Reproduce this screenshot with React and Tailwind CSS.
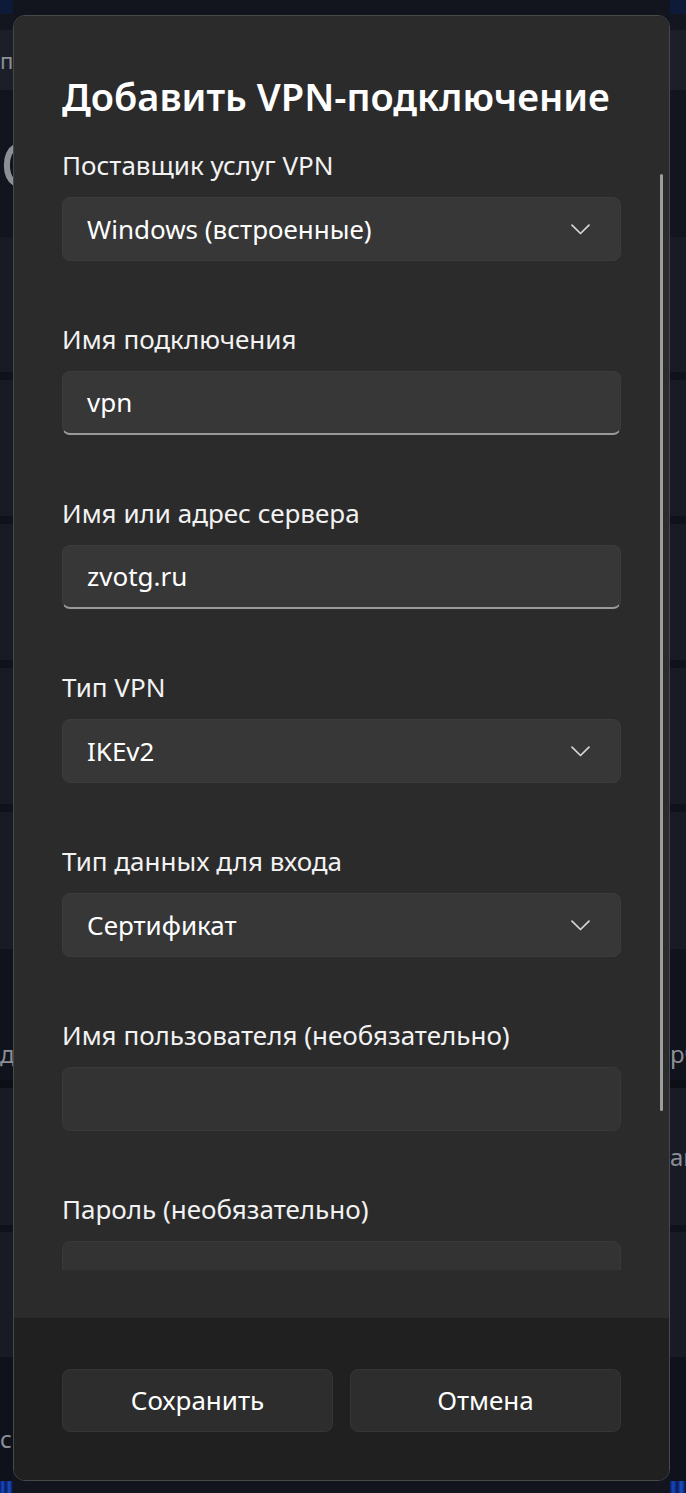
const fields = [
  { label: 'Поставщик услуг VPN', value: 'Windows (встроенные)', kind: 'select' },
  { label: 'Имя подключения', value: 'vpn', kind: 'input' },
  { label: 'Имя или адрес сервера', value: 'zvotg.ru', kind: 'input' },
  { label: 'Тип VPN', value: 'IKEv2', kind: 'select' },
  { label: 'Тип данных для входа', value: 'Сертификат', kind: 'select' },
  { label: 'Имя пользователя (необязательно)', value: '', kind: 'empty' },
  { label: 'Пароль (необязательно)', value: '', kind: 'empty' },
]

function Chevron() {
  return (
    <svg width="19" height="11" viewBox="0 0 19 11" fill="none" className="text-[#d6d6d6]">
      <path d="M1 1.2 L9.5 9.5 L18 1.2" stroke="currentColor" strokeWidth="1.7" strokeLinecap="round" strokeLinejoin="round" />
    </svg>
  )
}

function Field({ f }) {
  return (
    <div className="flex flex-col gap-4 mb-[62px]">
      <p className="h-8 flex items-center text-[26px] leading-8 text-[#f2f2f2]">{f.label}</p>
      <div
        className={
          'h-16 shrink-0 rounded-lg flex items-center justify-between pl-6 pr-[30px] text-[26px] text-white ' +
          (f.kind === 'input'
            ? 'bg-[#373737] border border-[#3c3c3c] border-b-2 border-b-[#9a9a9a]'
            : f.kind === 'select'
            ? 'bg-[#373737] border border-[#3c3c3c]'
            : 'bg-[#333333] border border-[#393939]')
        }
      >
        <span>{f.value}</span>
        {f.kind === 'select' && <Chevron />}
      </div>
    </div>
  )
}

function BgStrip({ side }) {
  const left = side === 'left'
  return (
    <div className="flex flex-col w-full h-full text-[#8c8f96]">
      <div className="h-[14px] bg-[#0d1a38]" />
      <div className="h-4 bg-[#13161e]" />
      <div className="h-[60px] bg-[#1c1f28] flex items-center text-[22px]">{left ? 'па' : ''}</div>
      <div className="h-[147px] bg-[#12151d] flex items-center text-[64px] leading-none">{left ? 'С' : ''}</div>
      <div className="h-[135px] bg-[#181b24]" />
      <div className="h-2 bg-[#0f121a]" />
      <div className="h-[136px] bg-[#181b24]" />
      <div className="h-2 bg-[#0f121a]" />
      <div className="h-[136px] bg-[#181b24]" />
      <div className="h-2 bg-[#0f121a]" />
      <div className="h-[136px] bg-[#181b24]" />
      <div className="h-2 bg-[#0f121a]" />
      <div className="h-[137px] bg-[#181b24]" />
      <div className="h-[131px] bg-[#10131b] flex items-end pb-2 text-[24px]">{left ? 'д' : 'рч'}</div>
      <div className="h-2 bg-[#0c0f16]" />
      <div className="h-[137px] bg-[#181b24] flex items-center text-[24px]">{left ? '' : 'ан'}</div>
      <div className="h-[7px] bg-[#0f121a]" />
      <div className="h-[125px] bg-[#181b24]" />
      <div className="h-[124px] bg-[#0f121a] flex items-end pb-6 text-[24px]">{left ? 'с' : ''}</div>
      <div className="flex-1 bg-[linear-gradient(90deg,#0a1f6e_0%,#1748c0_20%,#0a1a55_45%,#1b4fc7_70%,#07123d_100%)]" />
    </div>
  )
}

export default function App() {
  return (
    <div className="relative w-[686px] h-[1493px] overflow-hidden bg-[#12151d] font-['Noto_Sans','Open_Sans',sans-serif]">
      <div className="flex h-full">
        <div className="w-[13px] overflow-hidden"><BgStrip side="left" /></div>
        <div className="flex-1" />
        <div className="w-[16px] overflow-hidden"><BgStrip side="right" /></div>
      </div>

      <div className="absolute left-[13px] top-[15px] w-[657px] h-[1466px] rounded-[12px] border border-[#484848] overflow-hidden flex flex-col">
        <div className="relative h-[1302px] bg-[#2b2b2b] px-12 pb-12">
          <div className="h-full overflow-hidden pt-14">
            <h1 className="h-12 flex items-center text-[38px] font-semibold text-white mb-[29px] whitespace-nowrap">
              Добавить VPN-подключение
            </h1>
            {fields.map((f) => (
              <Field key={f.label} f={f} />
            ))}
          </div>
          <div className="absolute left-[646px] top-[158px] w-[3px] h-[937px] rounded-full bg-[#9d9d9d]" />
        </div>
        <div className="flex-1 bg-[#202020] px-12 pt-[51px]">
          <div className="grid grid-cols-2 gap-[17px]">
            <button className="h-[63px] rounded-lg bg-[#2d2d2d] border border-[#353535] text-[26px] text-white">Сохранить</button>
            <button className="h-[63px] rounded-lg bg-[#2d2d2d] border border-[#353535] text-[26px] text-white">Отмена</button>
          </div>
        </div>
      </div>
    </div>
  )
}
